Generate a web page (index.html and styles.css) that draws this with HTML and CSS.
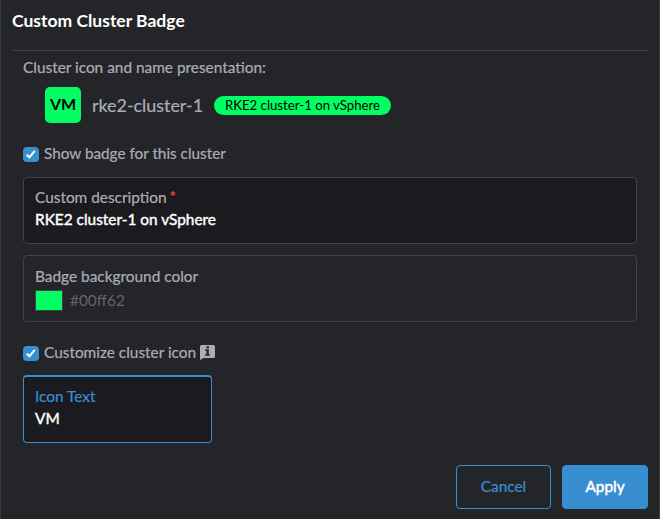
FILE: index.html
```
<!DOCTYPE html>
<html lang="en">
<head>
<meta charset="utf-8">
<title>Custom Cluster Badge</title>
<link rel="stylesheet" href="styles.css">
</head>
<body>
<main class="dialog">
  <h1 class="title">Custom Cluster Badge</h1>
  <section class="content">
    <p class="intro">Cluster icon and name presentation:</p>
    <div class="preview">
      <span class="cluster-icon">VM</span>
      <span class="cluster-name">rke2-cluster-1</span>
      <span class="badge">RKE2 cluster-1 on vSphere</span>
    </div>
    <div class="check check-badge">
      <span class="box"><svg viewBox="0 0 16 15"><path d="M3.8 7.8 6.4 10.3 11.8 3.9"/></svg></span>
      <span class="check-label">Show badge for this cluster</span>
    </div>
    <div class="field description">
      <div class="label">Custom description<span class="required">*</span></div>
      <div class="value">RKE2 cluster-1 on vSphere</div>
    </div>
    <div class="field color">
      <div class="label">Badge background color</div>
      <div class="color-row"><span class="swatch"></span><span class="hex">#00ff62</span></div>
    </div>
    <div class="check check-icon">
      <span class="box"><svg viewBox="0 0 16 15"><path d="M3.8 7.8 6.4 10.3 11.8 3.9"/></svg></span>
      <span class="check-label">Customize cluster icon</span>
      <svg class="info" viewBox="0 0 15 15"><path class="bubble" d="M1.500 0h12Q15 0 15 1.500v10Q15 13 13.500 13H3.500L0 15V1.500Q0 0 1.500 0Z"/><path class="mark" d="M6.500 1.300h2.500v1.900H6.500ZM5.200 4.300h3.600v5h1.100v1.500H5.100V9.300h1.300V5.800H5.200Z"/></svg>
    </div>
    <div class="field icon-text">
      <div class="label">Icon Text</div>
      <div class="value">VM</div>
    </div>
  </section>
  <footer class="actions">
    <button class="btn cancel">Cancel</button>
    <button class="btn apply">Apply</button>
  </footer>
</main>
</body>
</html>
```
FILE: styles.css
```
* { box-sizing: border-box; }
body { margin: 0; background: #242529; }
.dialog {
  height: 519px;
  padding: 0 11px;
  border-left: 1px solid #3a3b41;
  border-right: 1px solid #3a3b41;
  background: #242529;
  color: #acacb9;
  font: 15.4px/20px Lato, "Liberation Sans", sans-serif;
  white-space: nowrap;
  -webkit-text-stroke: 0.2px currentColor;
}
.title {
  height: 51px;
  margin: 0;
  padding-top: 11px;
  border-bottom: 1px solid #414247;
  color: #fff;
  font-size: 17.5px;
  line-height: 20px;
  -webkit-text-stroke: 0;
}
.content { padding: 0 11px; }
.intro { margin: 0; padding-top: 6px; }
.preview {
  display: flex;
  align-items: center;
  height: 36px;
  margin: 10px 0 0 22px;
}
.cluster-icon {
  width: 36px;
  height: 36px;
  border-radius: 5px;
  background: #00ff62;
  color: #000;
  font-size: 16px;
  font-weight: 700;
  line-height: 34px;
  text-align: center;
  -webkit-text-stroke: 0;
}
.cluster-name { width: 111px; margin: 0 0 0 11px; font-size: 17.9px; }
.badge {
  width: 177px;
  height: 19px;
  margin-left: 11px;
  border-radius: 10px;
  background: #00ff62;
  color: #000;
  font-size: 13.2px;
  line-height: 19px;
  text-align: center;
  -webkit-text-stroke: 0;
}
.check { display: flex; align-items: center; height: 20px; }
.check-badge { margin-top: 21px; }
.check-badge .check-label { font-size: 15.3px; }
.check-icon { margin-top: 21px; }
.box { width: 16px; height: 15px; margin-top: 1px; border-radius: 4px; background: #378fd0; }
.box svg { display: block; width: 16px; height: 15px; }
.box path { fill: none; stroke: #fff; stroke-width: 2; }
.check-label { margin: -2px 0 0 5px; }
.info { width: 15px; height: 15px; margin: -1px 0 0 4px; }
.bubble { fill: #acacb9; }
.mark { fill: #242529; }
.field {
  height: 67px;
  padding: 9px 11px;
  border: 1px solid #414247;
  border-radius: 4px;
}
.description { margin-top: 13px; background: #1b1b1f; }
.color { margin-top: 11px; padding-top: 10px; }
.icon-text {
  width: 189px;
  height: 68px;
  margin-top: 12px;
  border-color: #378fd0;
  border-top-width: 2px;
  background: #1b1b1f;
}
.icon-text .label { color: #378fd0; }
.value { margin-top: 2px; color: #fff; -webkit-text-stroke: 0.4px currentColor; }
.required { position: relative; top: -1px; margin-left: 3px; color: #f64747; }
.color-row { display: flex; align-items: center; height: 22px; margin-top: 3px; }
.swatch { width: 28px; height: 21px; border: 1px solid #414247; background: #00ff62; }
.hex { margin-left: 7px; color: #63646d; -webkit-text-stroke: 0; }
.actions { display: flex; justify-content: flex-end; gap: 11px; margin-top: 22px; }
.btn {
  height: 44px;
  padding: 0 0 2px;
  border: 1px solid #378fd0;
  border-radius: 4px;
  font: 15.4px/20px Lato, "Liberation Sans", sans-serif;
}
.cancel { width: 95px; background: transparent; color: #378fd0; }
.apply { width: 86px; background: #378fd0; color: #fff; -webkit-text-stroke: 0.5px currentColor; }
```
